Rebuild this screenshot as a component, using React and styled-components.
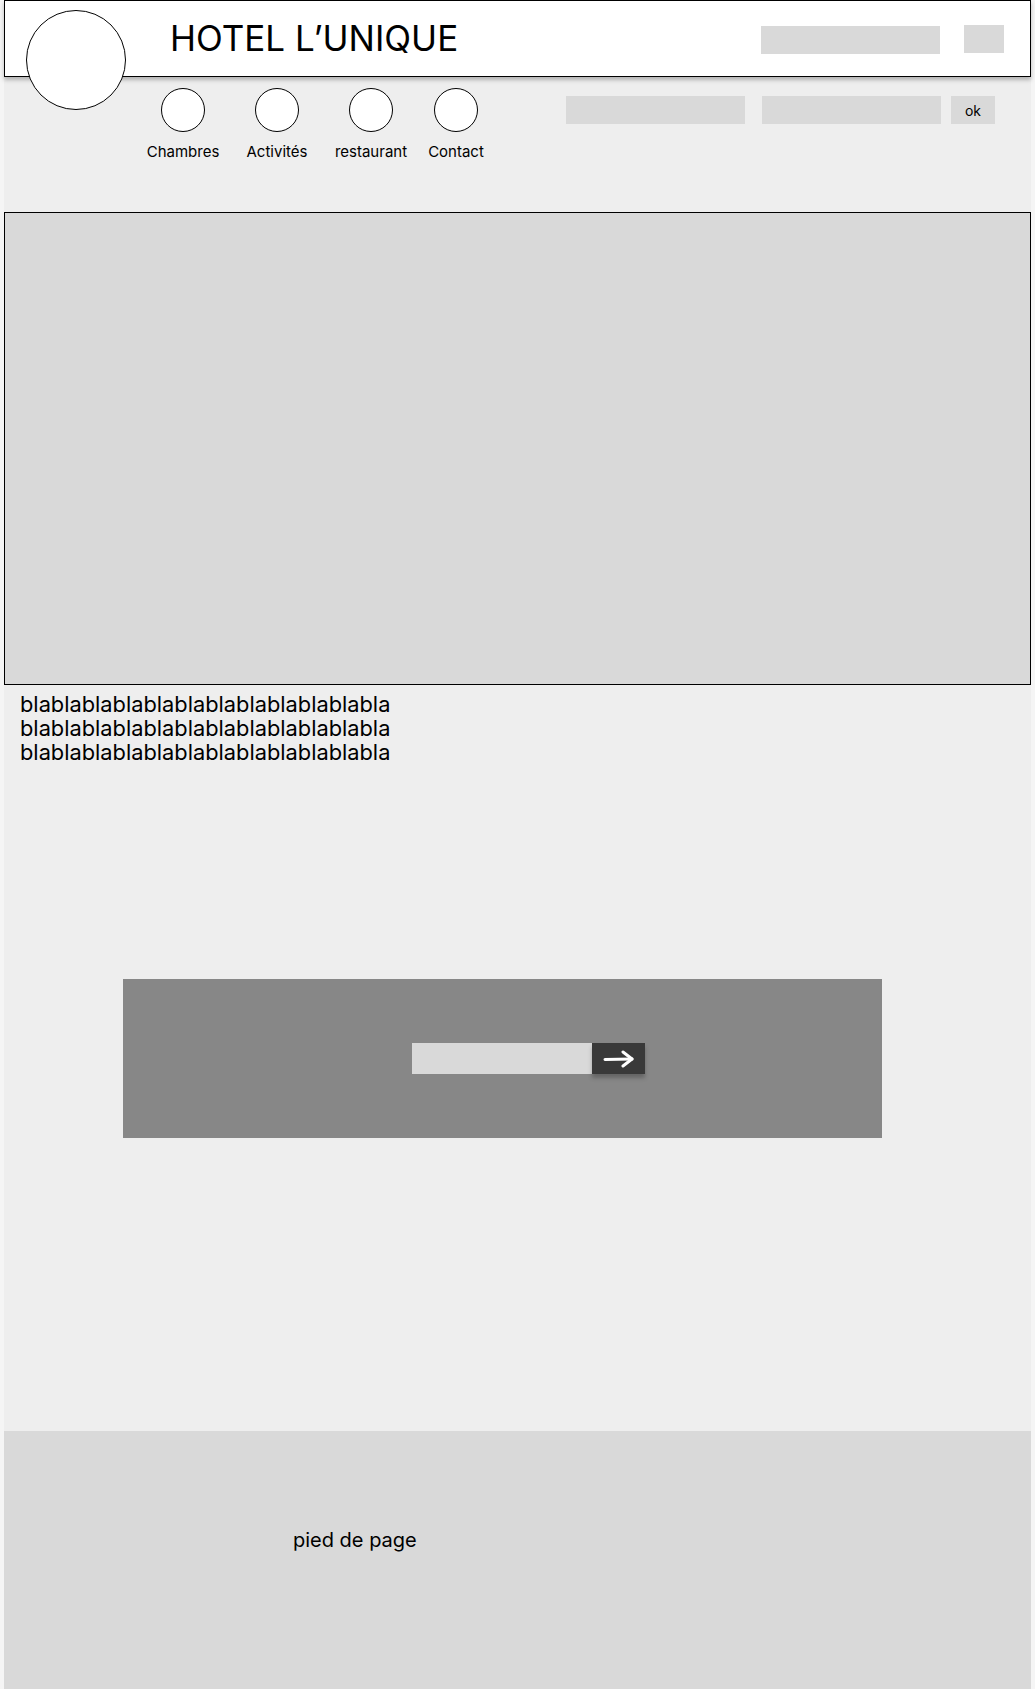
import styled, { createGlobalStyle } from 'styled-components';

const Global = createGlobalStyle`
  html, body {
    margin: 0;
    padding: 0;
    background: #f5f5f5;
    font-family: Inter, "Noto Sans", sans-serif;
    color: #000;
  }
`;

// cadre principal
const Page = styled.div`
  width: 1027px;
  margin-left: 4px;
  min-height: 1689px;
  background: #eeeeee;
  display: flex;
  flex-direction: column;
`;

const Header = styled.header`
  height: 75px;
  box-sizing: content-box;
  border: 1px solid #000;
  background: #fff;
  box-shadow: 0 3px 4px rgba(0, 0, 0, 0.25);
  display: flex;
  align-items: center;
  padding: 0 26px 0 21px;
  position: relative;
  z-index: 1;
`;

const Logo = styled.div`
  width: 98px;
  height: 98px;
  border: 1px solid #000;
  border-radius: 50%;
  background: #fff;
  align-self: flex-start;
  margin-top: 9px;
  flex-shrink: 0;
`;

const Title = styled.h1`
  margin: 0 0 2px 44px;
  font-size: 35px;
  font-weight: 400;
  flex: 1;
`;

const Field = styled.div`
  width: ${(p) => p.w || 179}px;
  height: 28px;
  background: #d9d9d9;
  margin-top: ${(p) => p.mt || 0}px;
`;

const HeaderTools = styled.div`
  display: flex;
  align-items: flex-start;
  gap: 24px;
  margin-top: 2px;
`;

const SubBar = styled.div`
  display: flex;
  justify-content: space-between;
  padding: 11px 36px 0 132px;
  height: 121px;
`;

const Nav = styled.nav`
  display: grid;
  grid-template-columns: 94px 94px 94px 76px;
`;

const NavItem = styled.a`
  display: flex;
  flex-direction: column;
  align-items: center;
  gap: 11px;
  font-size: 15px;
  line-height: 18px;
  color: #000;
  text-decoration: none;
`;

const Bubble = styled.span`
  width: 44px;
  height: 44px;
  box-sizing: border-box;
  border: 1px solid #000;
  border-radius: 50%;
  background: #fff;
`;

const Search = styled.form`
  display: flex;
  gap: 17px;
  margin-top: 8px;
  align-items: flex-start;
`;

const OkButton = styled.button`
  width: 44px;
  height: 28px;
  border: 0;
  background: #d9d9d9;
  font-family: inherit;
  font-size: 14px;
  color: #000;
  padding: 0;
  margin-left: -7px;
`;

const Hero = styled.section`
  height: 471px;
  border: 1px solid #000;
  background: #d9d9d9;
  margin-top: 3px;
`;

const Blabla = styled.p`
  margin: 7px 0 0 16px;
  font-size: 21.8px;
  line-height: 24px;
`;

const Newsletter = styled.section`
  width: 759px;
  height: 159px;
  margin: 215px 0 0 119px;
  background: #878787;
  display: flex;
  align-items: center;
  padding-left: 289px;
  box-sizing: border-box;
`;

const MailInput = styled.div`
  width: 180px;
  height: 31px;
  background: #d9d9d9;
`;

const Send = styled.button`
  width: 53px;
  height: 31px;
  border: 0;
  padding: 0;
  background: #393939;
  box-shadow: 0 4px 4px rgba(0, 0, 0, 0.25);
  display: flex;
  align-items: center;
  justify-content: center;
`;

const Footer = styled.footer`
  margin-top: auto;
  height: 258px;
  background: #d9d9d9;
  padding: 97px 0 0 289px;
  box-sizing: border-box;
  font-size: 20px;
`;

const navLinks = ['Chambres', 'Activités', 'restaurant', 'Contact'];

export default function App() {
  return (
    <>
      <Global />
      <Page>
        <Header>
          <Logo />
          <Title>HOTEL L’UNIQUE</Title>
          <HeaderTools>
            <Field mt={1} />
            <Field w={40} />
          </HeaderTools>
        </Header>

        <SubBar>
          <Nav>
            {navLinks.map((l) => (
              <NavItem key={l}>
                <Bubble />
                {l}
              </NavItem>
            ))}
          </Nav>
          <Search>
            <Field />
            <Field />
            <OkButton type="button">ok</OkButton>
          </Search>
        </SubBar>

        <Hero />

        <Blabla>
          blablablablablablablablablablablabla
          <br />
          blablablablablablablablablablablabla
          <br />
          blablablablablablablablablablablabla
        </Blabla>

        <Newsletter>
          <MailInput />
          <Send type="button">
            <svg width="32" height="18" viewBox="0 0 32 18">
              <path d="M2 9.5 L29 9" stroke="#fff" strokeWidth="3" strokeLinecap="round" fill="none" />
              <path d="M20 2 L29 9 L20 16" stroke="#fff" strokeWidth="3" strokeLinecap="round" strokeLinejoin="round" fill="none" />
            </svg>
          </Send>
        </Newsletter>

        <Footer>pied de page</Footer>
      </Page>
    </>
  );
}
